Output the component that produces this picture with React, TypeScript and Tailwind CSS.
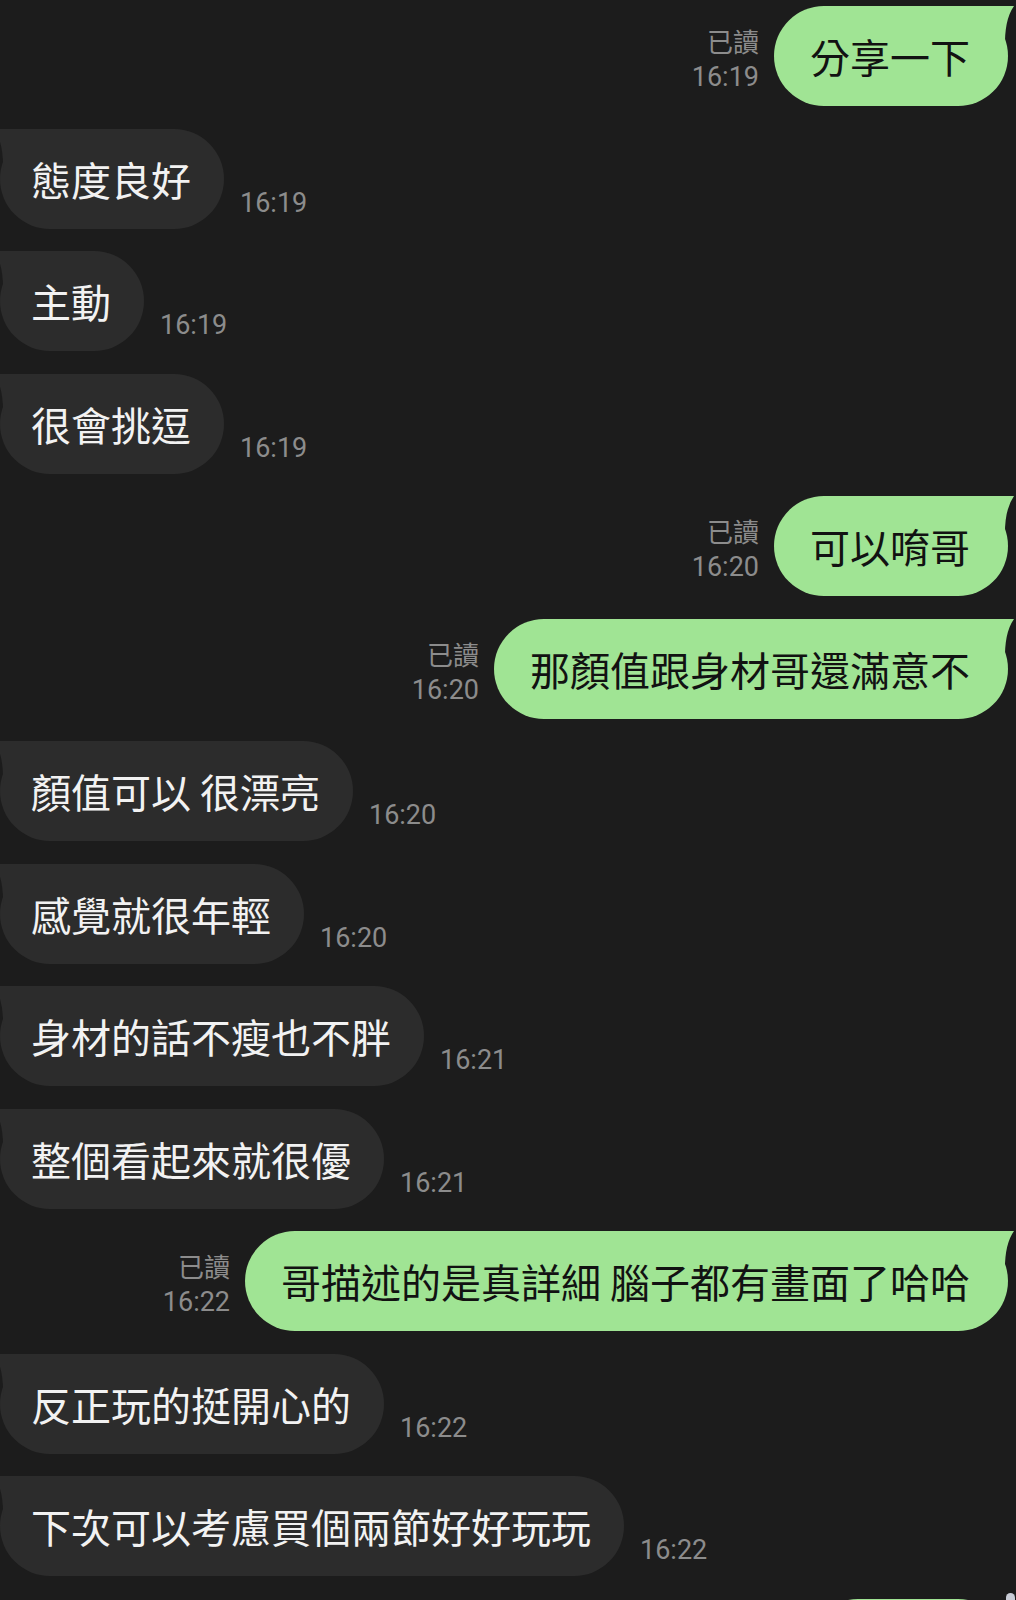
type Msg =
  | { from: "me"; text: string; time: string }
  | { from: "them"; text: string; time: string };

const messages: Msg[] = [
  { from: "me", text: "分享一下", time: "16:19" },
  { from: "them", text: "態度良好", time: "16:19" },
  { from: "them", text: "主動", time: "16:19" },
  { from: "them", text: "很會挑逗", time: "16:19" },
  { from: "me", text: "可以唷哥", time: "16:20" },
  { from: "me", text: "那顏值跟身材哥還滿意不", time: "16:20" },
  { from: "them", text: "顏值可以 很漂亮", time: "16:20" },
  { from: "them", text: "感覺就很年輕", time: "16:20" },
  { from: "them", text: "身材的話不瘦也不胖", time: "16:21" },
  { from: "them", text: "整個看起來就很優", time: "16:21" },
  { from: "me", text: "哥描述的是真詳細 腦子都有畫面了哈哈", time: "16:22" },
  { from: "them", text: "反正玩的挺開心的", time: "16:22" },
  { from: "them", text: "下次可以考慮買個兩節好好玩玩", time: "16:22" },
];

export default function App() {
  return (
    <div className="relative w-[1016px] h-[1600px] overflow-hidden bg-[#1c1c1c] font-['Roboto','Noto_Sans_CJK_TC',sans-serif]">
      <div className="flex flex-col gap-[22.5px] pt-[6px]">
        {messages.map((m, i) =>
          m.from === "me" ? (
            <MyBubble key={i} text={m.text} time={m.time} />
          ) : (
            <TheirBubble key={i} text={m.text} time={m.time} />
          )
        )}
        {/* next message just peeking in at the bottom */}
        <div className="flex justify-end pr-[8px]">
          <div className="relative h-[100px] w-[200px] rounded-[50px] bg-[#a0e494]" />
        </div>
      </div>
      {/* scroll thumb */}
      <div className="absolute right-[1px] bottom-[-5px] w-[9px] h-[12px] rounded-full bg-[#c9ccd6]" />
    </div>
  );
}

function MyBubble({ text, time }: { text: string; time: string }) {
  return (
    <div className="flex justify-end items-end pr-[8px]">
      <div className="flex flex-col items-end mr-[15px] pb-[11px] text-[#8c8c8c]">
        <span className="text-[26px] leading-[36px] font-['Noto_Sans_CJK_TC',sans-serif]">已讀</span>
        <span className="text-[27px] leading-[36px]">{time}</span>
      </div>
      <div className="relative h-[100px] flex items-center rounded-[50px] bg-[#a0e494] pl-[36px] pr-[38px]">
        <svg className="absolute top-0 right-[-6px]" width="56" height="44" viewBox="0 0 56 44">
          <path d="M0 0 L56 0 Q46 14 47 43 L0 43 Z" fill="#a0e494" />
        </svg>
        <span className="relative text-[40px] leading-none text-[#121212] whitespace-nowrap font-['Noto_Sans_CJK_TC',sans-serif]">
          {text}
        </span>
      </div>
    </div>
  );
}

function TheirBubble({ text, time }: { text: string; time: string }) {
  return (
    <div className="flex items-end">
      <div className="relative h-[100px] flex items-center rounded-[50px] bg-[#2c2c2c] pl-[31px] pr-[33px]">
        <svg className="absolute top-0 left-[-6px]" width="56" height="44" viewBox="0 0 56 44">
          <path d="M56 0 L0 0 Q10 14 9 43 L56 43 Z" fill="#2c2c2c" />
        </svg>
        <span className="relative text-[40px] leading-none text-[#f2f2f2] whitespace-nowrap font-['Noto_Sans_CJK_TC',sans-serif]">
          {text}
        </span>
      </div>
      <span className="ml-4 pb-[8px] text-[27px] leading-[36px] text-[#8c8c8c]">{time}</span>
    </div>
  );
}
